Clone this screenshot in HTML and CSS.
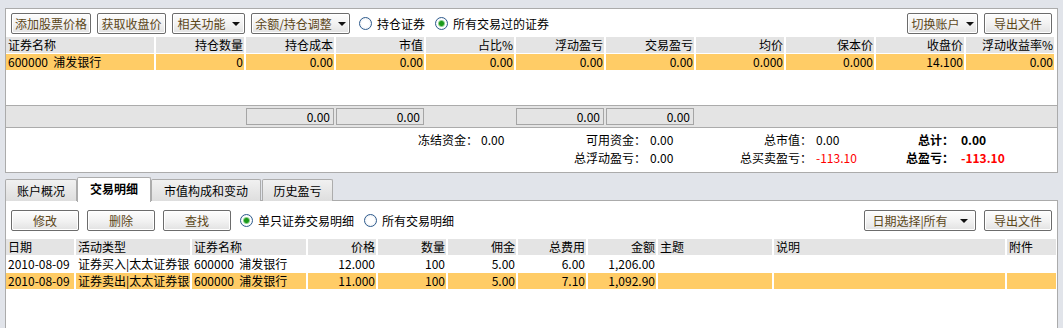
FILE: index.html
```html
<!DOCTYPE html>
<html>
<head>
  <title>证券账户</title>
  <link rel="stylesheet" href="styles.css">
</head>
<body>
  <div class="panel top-panel">
    <div class="toolbar">
      <div class="group">
        <button class="btn w80">添加股票价格</button>
        <button class="btn w69">获取收盘价</button>
        <button class="btn w73">相关功能<span class="caret"></span></button>
        <button class="btn w99">余额/持仓调整<span class="caret"></span></button>
        <label class="radio"><span class="dot"></span>持仓证券</label>
        <label class="radio checked"><span class="dot"></span>所有交易过的证券</label>
      </div>
      <div class="group">
        <button class="btn w71">切换账户<span class="caret"></span></button>
        <button class="btn w68">导出文件</button>
      </div>
    </div>

    <div class="grid holdings">
      <div class="hc left">证券名称</div>
      <div class="hc">持仓数量</div>
      <div class="hc">持仓成本</div>
      <div class="hc">市值</div>
      <div class="hc">占比%</div>
      <div class="hc">浮动盈亏</div>
      <div class="hc">交易盈亏</div>
      <div class="hc">均价</div>
      <div class="hc">保本价</div>
      <div class="hc">收盘价</div>
      <div class="hc">浮动收益率%</div>

      <div class="cell sel left">600000&nbsp; 浦发银行</div>
      <div class="cell sel">0</div>
      <div class="cell sel">0.00</div>
      <div class="cell sel">0.00</div>
      <div class="cell sel">0.00</div>
      <div class="cell sel">0.00</div>
      <div class="cell sel">0.00</div>
      <div class="cell sel">0.000</div>
      <div class="cell sel">0.000</div>
      <div class="cell sel">14.100</div>
      <div class="cell sel">0.00</div>
    </div>
    <div class="holdings-blank"></div>

    <div class="grid totals">
      <div class="box c3">0.00</div>
      <div class="box c4">0.00</div>
      <div class="box c6">0.00</div>
      <div class="box c7">0.00</div>
    </div>

    <div class="summary">
      <div class="lbl">冻结资金：</div><div class="val v1">0.00</div>
      <div class="lbl">可用资金：</div><div class="val">0.00</div>
      <div class="lbl">总市值：</div><div class="val">0.00</div>
      <div class="lbl bold">总计：</div><div class="val v4 bold">0.00</div>

      <div class="lbl"></div><div class="val v1"></div>
      <div class="lbl">总浮动盈亏：</div><div class="val">0.00</div>
      <div class="lbl">总买卖盈亏：</div><div class="val red">-113.10</div>
      <div class="lbl bold">总盈亏：</div><div class="val v4 bold red">-113.10</div>
    </div>
  </div>

  <div class="tabs">
    <div class="tab t1">账户概况</div>
    <div class="tab active t2">交易明细</div>
    <div class="tab t3">市值构成和变动</div>
    <div class="tab t4">历史盈亏</div>
  </div>

  <div class="panel bottom-panel">
    <div class="toolbar">
      <div class="group">
        <button class="btn w68">修改</button>
        <button class="btn w68 gap8">删除</button>
        <button class="btn w68 gap8">查找</button>
        <label class="radio checked"><span class="dot"></span>单只证券交易明细</label>
        <label class="radio"><span class="dot"></span>所有交易明细</label>
      </div>
      <div class="group">
        <button class="btn w112">日期选择|所有<span class="caret wide"></span></button>
        <button class="btn w68 gap8">导出文件</button>
      </div>
    </div>

    <div class="grid trades">
      <div class="hc left">日期</div>
      <div class="hc left">活动类型</div>
      <div class="hc left">证券名称</div>
      <div class="hc">价格</div>
      <div class="hc">数量</div>
      <div class="hc">佣金</div>
      <div class="hc">总费用</div>
      <div class="hc">金额</div>
      <div class="hc left">主题</div>
      <div class="hc left">说明</div>
      <div class="hc left">附件</div>

      <div class="cell left">2010-08-09</div>
      <div class="cell left">证券买入|太太证券银行</div>
      <div class="cell left">600000&nbsp; 浦发银行</div>
      <div class="cell">12.000</div>
      <div class="cell">100</div>
      <div class="cell">5.00</div>
      <div class="cell">6.00</div>
      <div class="cell">1,206.00</div>
      <div class="cell left"></div>
      <div class="cell left"></div>
      <div class="cell left"></div>

      <div class="cell sel left">2010-08-09</div>
      <div class="cell sel left">证券卖出|太太证券银行</div>
      <div class="cell sel left">600000&nbsp; 浦发银行</div>
      <div class="cell sel">11.000</div>
      <div class="cell sel">100</div>
      <div class="cell sel">5.00</div>
      <div class="cell sel">7.10</div>
      <div class="cell sel">1,092.90</div>
      <div class="cell sel left"></div>
      <div class="cell sel left"></div>
      <div class="cell sel left"></div>
    </div>
  </div>
</body>
</html>
```

FILE: styles.css
```css
body {
  margin: 0;
  background: #e1e4ea;
  font-family: "Noto Sans CJK SC", sans-serif;
  font-size: 12px;
  color: #000;
}

.panel {
  margin-left: 5px;
  width: 1051px;
  border: 1px solid #ababab;
  background: #fff;
}
.top-panel { margin-top: 8px; }
.bottom-panel { height: 140px; border-bottom: none; }

/* toolbars */
.toolbar {
  display: flex;
  justify-content: space-between;
  align-items: center;
  padding: 4px 5px 3px;
}
.bottom-panel .toolbar { padding: 9px 5px 8px; }
.group { display: flex; align-items: center; gap: 6px; }
.gap8 { margin-left: 2px; }

.btn {
  height: 21px;
  box-sizing: border-box;
  display: flex;
  align-items: center;
  justify-content: center;
  padding: 0;
  border: 1px solid #6c6c6c;
  border-radius: 2px;
  background: linear-gradient(#fdfdfd, #f1f1f1 55%, #e2e2e2);
  box-shadow: inset 0 0 0 1px #fff;
  color: #5b4618;
  font-family: inherit;
  font-size: 12px;
  line-height: 1;
}
.w68 { width: 68px; }
.w69 { width: 69px; }
.w71 { width: 71px; }
.w73 { width: 73px; }
.w80 { width: 80px; }
.w99 { width: 99px; }
.w112 { width: 112px; }

.caret {
  width: 0;
  height: 0;
  margin-left: 6px;
  border-left: 4px solid transparent;
  border-right: 4px solid transparent;
  border-top: 4px solid #111;
}
.caret.wide { margin-left: 12px; }

.radio {
  display: flex;
  align-items: center;
  gap: 5px;
  margin-left: 3px;
  white-space: nowrap;
}
.radio + .radio { margin-left: 4px; }
.dot {
  width: 13px;
  height: 13px;
  box-sizing: border-box;
  border: 1px solid #2d5a8c;
  border-radius: 50%;
  background: radial-gradient(circle, #fff 40%, #e4e8ee);
}
.radio.checked .dot {
  background: radial-gradient(circle, #1a9a1a 0 2px, #8fd08f 3px, #fff 4px, #e4e8ee);
}

/* grids */
.grid {
  display: grid;
  column-gap: 2px;
  row-gap: 1px;
}
.holdings { grid-template-columns: 148px repeat(10, 88px); }
.trades { grid-template-columns: 68px 114px 114px 68px 68px 68px 68px 68px 114px 231px 49px; }

.hc, .cell {
  height: 16px;
  line-height: 16px;
  padding: 0 1px 0 2px;
  text-align: right;
  white-space: nowrap;
  overflow: hidden;
}
.hc { background: #e4e4e4; }
.left { text-align: left; }
.sel { background: #ffcc66; }

.holdings-blank { height: 35px; }

.totals {
  grid-template-columns: 148px repeat(10, 88px);
  background: #e4e4e4;
  border-top: 1px solid #ababab;
  border-bottom: 1px solid #ababab;
  padding: 2px 0;
}
.box {
  height: 17px;
  box-sizing: border-box;
  line-height: 15px;
  border: 1px solid #a5a5a5;
  text-align: right;
  padding-right: 3px;
}
.c3 { grid-column: 3; }
.c4 { grid-column: 4; }
.c6 { grid-column: 6; }
.c7 { grid-column: 7; }

/* summary */
.summary {
  display: grid;
  grid-template-columns: 472px 88px 80px 94px 72px 78px 64px auto;
  grid-auto-rows: 18px;
  line-height: 18px;
  padding: 3px 0 5px;
}
.lbl { text-align: right; white-space: nowrap; }
.val { padding-left: 4px; white-space: nowrap; }
.v1 { padding-left: 3px; }
.v4 { padding-left: 7px; }
.bold { font-weight: bold; }
.red { color: #f00; }

/* tabs */
.tabs {
  display: flex;
  align-items: flex-end;
  height: 28px;
  padding-left: 5px;
  margin-bottom: -1px;
  position: relative;
}
.tab {
  height: 22px;
  box-sizing: border-box;
  line-height: 21px;
  text-align: center;
  border: 1px solid #acacac;
  border-bottom: none;
  border-radius: 2px 2px 0 0;
  background: linear-gradient(#f1f1f1, #dedede);
}
.tab.active {
  height: 25px;
  line-height: 22px;
  background: #fff;
  font-weight: bold;
  margin-bottom: -1px;
  position: relative;
}
.t1 { width: 72px; }
.t2 { width: 74px; }
.t3 { width: 110px; }
.t4 { width: 71px; margin-left: 1px; }
```
